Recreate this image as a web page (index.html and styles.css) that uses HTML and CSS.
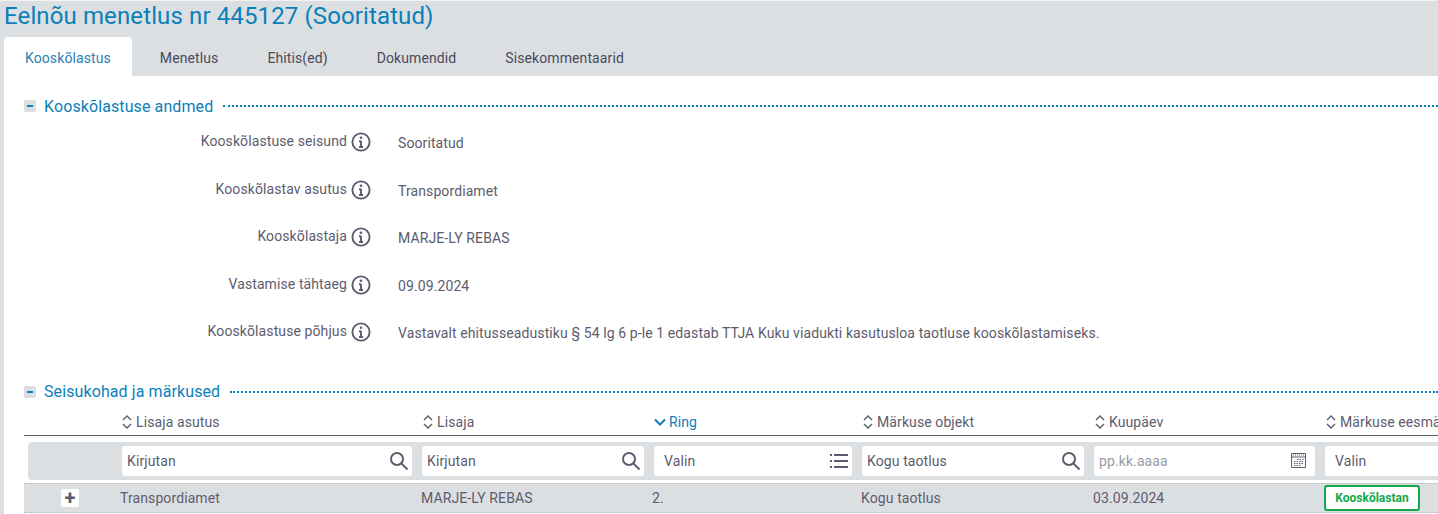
FILE: index.html
```html
<!DOCTYPE html>
<html>
<head>
    <title>Eelnõu menetlus nr 445127</title>
    <link rel="stylesheet" href="styles.css">
</head>
<body>
    <div class="header">
        <h1>Eelnõu menetlus nr 445127 (Sooritatud)</h1>
        <div class="tabs">
            <a class="tab active">Kooskõlastus</a>
            <a class="tab">Menetlus</a>
            <a class="tab">Ehitis(ed)</a>
            <a class="tab">Dokumendid</a>
            <a class="tab">Sisekommentaarid</a>
        </div>
    </div>

    <div class="content">
        <div class="section-head">
            <span class="collapse"></span>
            <h2>Kooskõlastuse andmed</h2>
            <span class="dots"></span>
        </div>

        <div class="details">
            <div class="detail">
                <div class="detail-label">Kooskõlastuse seisund
                    <svg class="info" viewBox="0 0 20 20"><circle cx="10" cy="10" r="8.6"/><path d="M10 9v6M8 9.2h2M8 15h4"/><circle class="dot" cx="10" cy="5.8" r="1.3"/></svg>
                </div>
                <div class="detail-value">Sooritatud</div>
            </div>
            <div class="detail">
                <div class="detail-label">Kooskõlastav asutus
                    <svg class="info" viewBox="0 0 20 20"><circle cx="10" cy="10" r="8.6"/><path d="M10 9v6M8 9.2h2M8 15h4"/><circle class="dot" cx="10" cy="5.8" r="1.3"/></svg>
                </div>
                <div class="detail-value">Transpordiamet</div>
            </div>
            <div class="detail">
                <div class="detail-label">Kooskõlastaja
                    <svg class="info" viewBox="0 0 20 20"><circle cx="10" cy="10" r="8.6"/><path d="M10 9v6M8 9.2h2M8 15h4"/><circle class="dot" cx="10" cy="5.8" r="1.3"/></svg>
                </div>
                <div class="detail-value">MARJE-LY REBAS</div>
            </div>
            <div class="detail">
                <div class="detail-label">Vastamise tähtaeg
                    <svg class="info" viewBox="0 0 20 20"><circle cx="10" cy="10" r="8.6"/><path d="M10 9v6M8 9.2h2M8 15h4"/><circle class="dot" cx="10" cy="5.8" r="1.3"/></svg>
                </div>
                <div class="detail-value">09.09.2024</div>
            </div>
            <div class="detail">
                <div class="detail-label">Kooskõlastuse põhjus
                    <svg class="info" viewBox="0 0 20 20"><circle cx="10" cy="10" r="8.6"/><path d="M10 9v6M8 9.2h2M8 15h4"/><circle class="dot" cx="10" cy="5.8" r="1.3"/></svg>
                </div>
                <div class="detail-value">Vastavalt ehitusseadustiku § 54 lg 6 p-le 1 edastab TTJA Kuku viadukti kasutusloa taotluse kooskõlastamiseks.</div>
            </div>
        </div>

        <div class="section-head second">
            <span class="collapse"></span>
            <h2>Seisukohad ja märkused</h2>
            <span class="dots"></span>
        </div>

        <div class="table">
            <div class="row head-row">
                <div></div>
                <div class="th"><svg class="sort" viewBox="0 0 10 14"><path d="M1 5l4-4 4 4M1 9l4 4 4-4"/></svg>Lisaja asutus</div>
                <div class="th"><svg class="sort" viewBox="0 0 10 14"><path d="M1 5l4-4 4 4M1 9l4 4 4-4"/></svg>Lisaja</div>
                <div class="th sorted"><svg class="sort-down" viewBox="0 0 12 8"><path d="M1 1.5l5 5 5-5"/></svg>Ring</div>
                <div class="th"><svg class="sort" viewBox="0 0 10 14"><path d="M1 5l4-4 4 4M1 9l4 4 4-4"/></svg>Märkuse objekt</div>
                <div class="th"><svg class="sort" viewBox="0 0 10 14"><path d="M1 5l4-4 4 4M1 9l4 4 4-4"/></svg>Kuupäev</div>
                <div class="th"><svg class="sort" viewBox="0 0 10 14"><path d="M1 5l4-4 4 4M1 9l4 4 4-4"/></svg>Märkuse eesmärk</div>
            </div>

            <div class="filter-row">
                <div></div>
                <div class="filter"><span>Kirjutan</span><svg class="search" viewBox="0 0 20 20"><circle cx="8" cy="8" r="6"/><path d="M12.5 12.5l6 6"/></svg></div>
                <div class="filter"><span>Kirjutan</span><svg class="search" viewBox="0 0 20 20"><circle cx="8" cy="8" r="6"/><path d="M12.5 12.5l6 6"/></svg></div>
                <div class="filter select"><span>Valin</span><svg class="list" viewBox="0 0 20 16"><path d="M5 2h14M5 8h14M5 14h14M1 2h2M1 8h2M1 14h2"/></svg></div>
                <div class="filter"><span>Kogu taotlus</span><svg class="search" viewBox="0 0 20 20"><circle cx="8" cy="8" r="6"/><path d="M12.5 12.5l6 6"/></svg></div>
                <div class="filter date"><span>pp.kk.aaaa</span><svg class="calendar" viewBox="0 0 15 15"><path d="M.5.5h14v14H.5z"/><path class="cal-top" d="M2 2h11"/><path d="M1 4h13"/><path class="cal-grid" d="M6 6.5h7M3 8.5h10M3 10.5h10M3 12.5h7"/></svg></div>
                <div class="filter select"><span>Valin</span></div>
            </div>

            <div class="row data-row">
                <div class="expand-cell"><span class="expand">+</span></div>
                <div>Transpordiamet</div>
                <div>MARJE-LY REBAS</div>
                <div>2.</div>
                <div>Kogu taotlus</div>
                <div>03.09.2024</div>
                <div><span class="badge">Kooskõlastan</span></div>
            </div>
        </div>
    </div>
</body>
</html>
```

FILE: styles.css
```css
html, body {
    height: 100%;
}

body {
    font-family: Roboto, sans-serif;
    font-size: 14px;
    letter-spacing: 0.1px;
    margin: 0;
    padding: 0;
    background-color: white;
    color: #5c5c6e;
    overflow: hidden;
}

.header {
    background-color: #dcdfe2;
    height: 75px;
    border-top: 1px solid #f2f3f4;
    padding-left: 4px;
    display: flex;
    flex-direction: column;
}

h1 {
    font-size: 24px;
    font-weight: 400;
    line-height: 30px;
    letter-spacing: 0.12px;
    color: #0a80ba;
    margin: 0 0 6px 0;
    white-space: nowrap;
}

.tabs {
    display: flex;
    height: 39px;
}

.tab {
    line-height: 42px;
    padding: 0 21px;
    margin-right: 7px;
    color: #4a4a5c;
    white-space: nowrap;
}

.tab.active {
    background-color: white;
    color: #2a7fb5;
    border-radius: 4px 4px 0 0;
}

.content {
    border-left: 4px solid #dcdfe2;
    padding: 19px 0 0 20px;
    height: 419px;
}

.section-head {
    display: flex;
    align-items: center;
    height: 22px;
}

.section-head.second {
    margin-top: 12px;
}

.collapse {
    width: 12px;
    height: 12px;
    background-color: #dcdfe2;
    border-radius: 2px;
    margin-right: 8px;
    position: relative;
}

.collapse::after {
    content: "";
    position: absolute;
    left: 3px;
    top: 5px;
    width: 6px;
    height: 2px;
    background-color: #0a80ba;
}

h2 {
    font-size: 16px;
    font-weight: 400;
    letter-spacing: 0.1px;
    color: #0a80ba;
    margin: 0 10px 0 0;
    white-space: nowrap;
}

.dots {
    flex: 1;
    border-top: 2px dotted #0a80ba;
}

.details {
    padding-top: 14px;
}

.detail {
    display: flex;
    height: 47.5px;
}

.detail-label {
    width: 347px;
    display: flex;
    justify-content: flex-end;
    gap: 4px;
    line-height: 20px;
    flex-shrink: 0;
    white-space: nowrap;
}

.info {
    width: 20px;
    height: 20px;
    fill: none;
    stroke: #5c5c6e;
    stroke-width: 1.9;
    flex-shrink: 0;
    margin-top: 1px;
}

.info .dot {
    fill: #5c5c6e;
    stroke: none;
}

.detail-value {
    margin-left: 27px;
    line-height: 22px;
    padding-top: 1px;
    white-space: nowrap;
}

.row {
    display: grid;
    grid-template-columns: 96px 301px 231px 209px 232px 231px 200px;
}

.head-row {
    height: 25px;
    padding-top: 7px;
    align-items: center;
    border-bottom: 1px solid #5c5c6e;
    white-space: nowrap;
}

.th {
    display: flex;
    align-items: center;
    gap: 4px;
    padding-left: 2px;
}

.sort {
    width: 10px;
    height: 14px;
    fill: none;
    stroke: #5c5c6e;
    stroke-width: 1.4;
}

.sorted {
    color: #0a80ba;
    gap: 3px;
}

.sort-down {
    width: 12px;
    height: 8px;
    fill: none;
    stroke: #0a80ba;
    stroke-width: 2;
}

.filter-row {
    display: grid;
    grid-template-columns: 84px 290px 222px 198px 222px 221px 200px;
    column-gap: 10px;
    background-color: #dcdfe2;
    height: 38px;
    margin: 6px 0 3px 4px;
    padding-top: 4px;
    box-sizing: border-box;
    border-radius: 4px 0 0 4px;
}

.filter {
    background-color: white;
    height: 30px;
    border-radius: 3px;
    display: flex;
    align-items: center;
    justify-content: space-between;
    padding: 0 3px 0 5px;
}

.select span {
    padding-left: 5px;
}

.date span {
    color: #9a9aa8;
}

.search {
    width: 20px;
    height: 20px;
    fill: none;
    stroke: #5c5c6e;
    stroke-width: 2;
}

.list {
    width: 20px;
    height: 16px;
    fill: none;
    stroke: #5c5c6e;
    stroke-width: 2;
}

.calendar {
    width: 15px;
    height: 15px;
    fill: none;
    stroke: #5c5c6e;
    stroke-width: 1;
    margin-right: 6px;
}

.cal-top {
    stroke-dasharray: 1 1;
}

.cal-grid {
    stroke-dasharray: 1.5 1;
}

.data-row {
    background-color: #dcdfe2;
    height: 30px;
    align-items: center;
    border-top: 1px dotted #b5b8bb;
    border-bottom: 1px dotted #b5b8bb;
    box-sizing: border-box;
    white-space: nowrap;
}

.expand-cell {
    padding-left: 37px;
}

.expand {
    display: block;
    width: 18px;
    height: 18px;
    background-color: white;
    border-radius: 2px;
    color: #5c5c6e;
    font-size: 20px;
    font-weight: 700;
    line-height: 18px;
    text-align: center;
}

.badge {
    display: block;
    width: 96px;
    height: 26px;
    box-sizing: border-box;
    border: 2px solid #12a84a;
    border-radius: 3px;
    background-color: white;
    color: #12a84a;
    font-size: 12px;
    font-weight: 700;
    letter-spacing: 0;
    line-height: 22px;
    text-align: center;
}
```
